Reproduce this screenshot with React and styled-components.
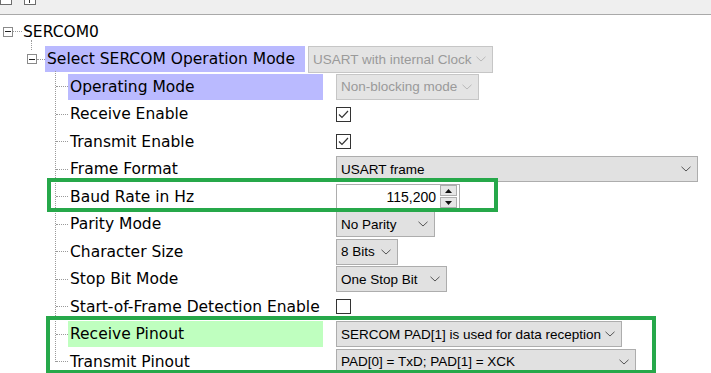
import React from "react";
import styled, { createGlobalStyle } from "styled-components";

const GlobalStyle = createGlobalStyle`
  html, body {
    margin: 0;
    padding: 0;
    background: #ffffff;
    overflow: hidden;
  }
  body {
    font-family: "DejaVu Sans", Verdana, sans-serif;
    color: #000;
  }
`;

const Window = styled.div`
  width: 711px;
  height: 373px;
  overflow: hidden;
  background: #fff;
`;

const Toolbar = styled.div`
  height: 14px;
  background: #efefef;
  border-bottom: 1px solid #a9a9a9;
  display: flex;
  gap: 12px;
  padding-left: 0;
  overflow: hidden;
`;

const ToolIcon = styled.div`
  width: 10px;
  height: 10px;
  margin-top: -7px;
  border: 1px solid #6d6d6d;
  background: #fff;
  position: relative;
  &::after {
    content: "";
    display: ${(p) => (p.$plus ? "block" : "none")};
    position: absolute;
    left: 4px;
    top: 2px;
    width: 1px;
    height: 7px;
    background: #333;
  }
`;

const Tree = styled.div`
  padding-top: 3px;
`;

const Row = styled.div`
  display: flex;
  align-items: center;
  height: 27.5px;
  padding-left: ${(p) => p.$indent}px;
  white-space: nowrap;
`;

const Expander = styled.div`
  width: 8px;
  height: 8px;
  border: 1px solid #8a8a8a;
  background: #fff;
  position: relative;
  flex: none;
  &::after {
    content: "";
    position: absolute;
    left: 1px;
    right: 1px;
    top: 3.5px;
    height: 1px;
    background: #222;
  }
`;

const Dots = styled.div`
  width: ${(p) => p.$w}px;
  height: 0;
  border-top: 1px dotted #9a9a9a;
  flex: none;
`;

const Label = styled.div`
  font-size: 15.5px;
  height: 26px;
  line-height: 26px;
  padding: ${(p) => p.$pad || "0 0 0 2px"};
  background: ${(p) => p.$bg || "transparent"};
  width: ${(p) => (p.$w ? p.$w + "px" : "auto")};
  flex: none;
  box-sizing: border-box;
  margin-right: ${(p) => p.$gap || 0}px;
`;

const Children = styled.div`
  position: relative;
  &::before {
    content: "";
    position: absolute;
    left: ${(p) => p.$line}px;
    top: -2px;
    bottom: 14px;
    border-left: 1px dotted #9a9a9a;
  }
`;

const StubLine = styled.div`
  position: relative;
  &::before {
    content: "";
    position: absolute;
    left: 31px;
    top: -6px;
    height: 10px;
    border-left: 1px dotted #9a9a9a;
  }
`;

const Select = styled.div`
  display: flex;
  align-items: center;
  justify-content: space-between;
  box-sizing: border-box;
  width: ${(p) => p.$w}px;
  height: ${(p) => p.$h || 26}px;
  margin-left: ${(p) => p.$ml || 0}px;
  padding: 0 6px 0 4px;
  background: ${(p) => (p.$disabled ? "#e4e4e4" : "#e1e1e1")};
  border: 1px solid ${(p) => (p.$disabled ? "#c6c6c6" : "#adadad")};
  color: ${(p) => (p.$disabled ? "#9a9a9a" : "#000")};
  font-family: "Liberation Sans", Arial, sans-serif;
  font-size: 13.5px;
  flex: none;
`;

const Chevron = ({ color }) => (
  <svg width="10" height="6" viewBox="0 0 10 6">
    <path d="M0.5 0.8 L5 5 L9.5 0.8" stroke={color} strokeWidth="1" fill="none" />
  </svg>
);

const Check = styled.div`
  width: 13px;
  height: 13px;
  border: 1px solid #333;
  background: #fff;
  display: flex;
  align-items: center;
  justify-content: center;
  flex: none;
`;

const CheckMark = () => (
  <svg width="11" height="9" viewBox="0 0 11 9">
    <path d="M1 4.5 L4 7.5 L10 1" stroke="#333" strokeWidth="1.2" fill="none" />
  </svg>
);

const Spinner = styled.div`
  display: flex;
  align-items: center;
  justify-content: flex-end;
  box-sizing: border-box;
  width: 124px;
  height: 25px;
  border: 1px solid #adadad;
  background: #fff;
  padding-right: 2px;
  font-family: "Liberation Sans", Arial, sans-serif;
  font-size: 14px;
  flex: none;
`;

const SpinValue = styled.span`
  margin-right: 4px;
`;

const SpinButtons = styled.div`
  display: flex;
  flex-direction: column;
  gap: 1px;
`;

const SpinButton = styled.div`
  width: 15px;
  height: 9px;
  background: #e6e6e6;
  border: 1px solid #adadad;
  display: flex;
  align-items: center;
  justify-content: center;
`;

const Tri = ({ down }) => (
  <svg width="7" height="4" viewBox="0 0 7 4">
    <path d={down ? "M0 0 L7 0 L3.5 4 Z" : "M0 4 L7 4 L3.5 0 Z"} fill="#111" />
  </svg>
);

const Frame = styled.div`
  position: relative;
  &::after {
    content: "";
    position: absolute;
    left: ${(p) => p.$left}px;
    width: ${(p) => p.$w}px;
    top: ${(p) => p.$top}px;
    bottom: ${(p) => p.$bottom}px;
    border: 4px solid #26a84a;
    box-sizing: border-box;
    pointer-events: none;
  }
`;

const LEAF_INDENT = 56;
const LABEL_W = 255;

const Leaf = ({ label, bg, children }) => (
  <Row $indent={LEAF_INDENT}>
    <Dots $w={12} />
    <Label $w={LABEL_W} $bg={bg} $gap={13}>
      {label}
    </Label>
    {children}
  </Row>
);

const Drop = ({ w, text, disabled, ml, h }) => (
  <Select $w={w} $disabled={disabled} $ml={ml} $h={h}>
    <span>{text}</span>
    <Chevron color={disabled ? "#b8b8b8" : "#555"} />
  </Select>
);

export default function App() {
  return (
    <Window>
      <GlobalStyle />
      <Toolbar>
        <ToolIcon />
        <ToolIcon $plus />
      </Toolbar>
      <Tree>
        <Row $indent={3}>
          <Expander />
          <Dots $w={9} />
          <Label $pad="0 0 0 1px">SERCOM0</Label>
        </Row>
        <StubLine>
          <Row $indent={27}>
            <Expander />
            <Dots $w={8} />
            <Label $bg="#babaff" $pad="0 10px 0 2px" $gap={3}>
              Select SERCOM Operation Mode
            </Label>
            <Drop w={185} text="USART with internal Clock" disabled h={27} />
          </Row>
        </StubLine>
        <Children $line={55}>
          <Leaf label="Operating Mode" bg="#babaff">
            <Drop w={143} text="Non-blocking mode" disabled />
          </Leaf>
          <Leaf label="Receive Enable">
            <Check>
              <CheckMark />
            </Check>
          </Leaf>
          <Leaf label="Transmit Enable">
            <Check>
              <CheckMark />
            </Check>
          </Leaf>
          <Leaf label="Frame Format">
            <Drop w={362} text="USART frame" />
          </Leaf>
          <Frame $left={47} $w={451} $top={-5} $bottom={-1}>
            <Leaf label="Baud Rate in Hz">
              <Spinner>
                <SpinValue>115,200</SpinValue>
                <SpinButtons>
                  <SpinButton>
                    <Tri />
                  </SpinButton>
                  <SpinButton>
                    <Tri down />
                  </SpinButton>
                </SpinButtons>
              </Spinner>
            </Leaf>
          </Frame>
          <Leaf label="Parity Mode">
            <Drop w={99} text="No Parity" />
          </Leaf>
          <Leaf label="Character Size">
            <Drop w={62} text="8 Bits" />
          </Leaf>
          <Leaf label="Stop Bit Mode">
            <Drop w={111} text="One Stop Bit" />
          </Leaf>
          <Leaf label="Start-of-Frame Detection Enable">
            <Check />
          </Leaf>
          <Frame $left={46} $w={610} $top={-5} $bottom={2}>
            <Leaf label="Receive Pinout" bg="#bfffbf">
              <Drop w={286} text="SERCOM PAD[1] is used for data reception" />
            </Leaf>
            <Leaf label="Transmit Pinout">
              <Drop w={300} text="PAD[0] = TxD; PAD[1] = XCK" />
            </Leaf>
          </Frame>
        </Children>
      </Tree>
    </Window>
  );
}
